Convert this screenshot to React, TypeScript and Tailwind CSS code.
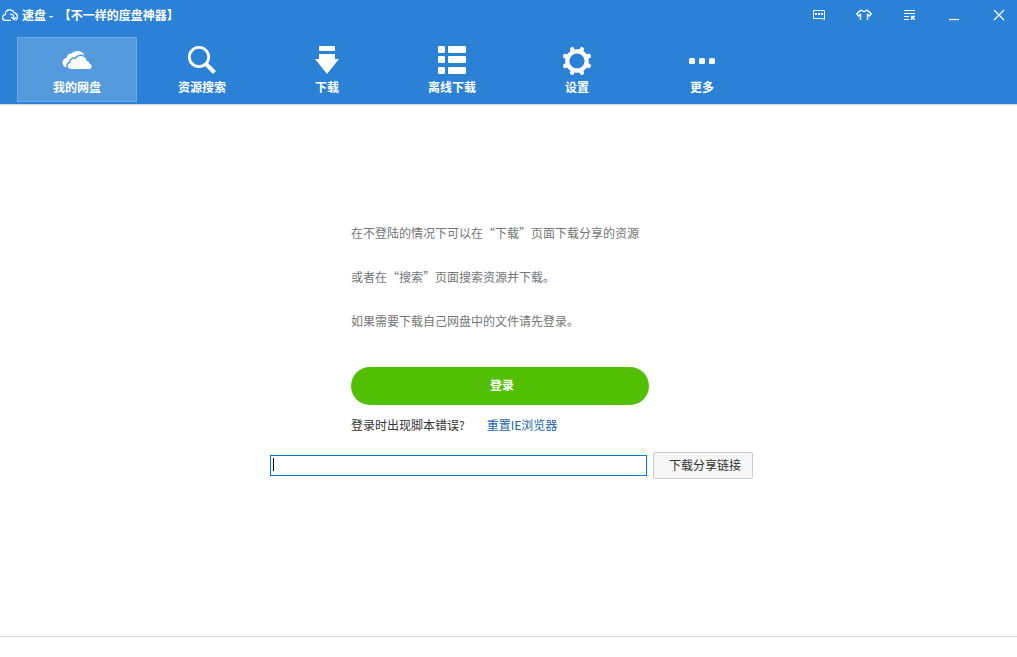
import type { ReactNode } from "react";

function LogoIcon() {
  return (
    <svg className="h-3 w-4" viewBox="0 0 16 12" fill="none" stroke="white" strokeWidth="1.2" strokeLinecap="round" strokeLinejoin="round">
      <path d="M8.5 11.3h-5A2.8 2.8 0 0 1 3.2 5.7C3.4 2.6 5.4.8 7.8.8c2 0 3.500 1 4.200 2.800" />
      <path d="M8.500 5.400c2.200-.6 3.400.8 3.400 4.800M9.600 8.400l2.300 2.200 2.200-2.200" />
      <path d="M12.400 3.800c2 .5 3 2 3 3.900 0 2-.6 3.100-1.600 3.600" />
    </svg>
  );
}

function CloudIcon() {
  return (
    <svg className="h-5 w-[30px]" viewBox="0 0 30 20" fill="white">
      <path d="M7 17.500H4.600C1.800 16.600.4 14.600.5 12.400.6 10 2.300 8.300 4.500 8.100 4.800 5.200 7 3.400 9.600 3.500 11 1.600 13.200.8 15.600.9c3.600.1 6.500 2.200 7 5.500V12H10z" />
      <path
        d="M9.600 19C7.200 19 5.700 17.600 5.700 15.900c0-1.600 1.100-2.800 2.600-3C8 10.200 10.500 8.200 13.700 9c1.300-2 3.200-3 5.300-2.900 3.100.1 5.300 2.300 5.600 5 2 .2 2.800 1.300 2.800 2.700 1.400.3 2.200 1.300 2.200 2.600 0 1.500-1.200 2.600-2.900 2.600z"
        stroke="#559add"
        strokeWidth="3"
        paintOrder="stroke"
      />
    </svg>
  );
}

function SearchIcon() {
  return (
    <svg className="h-[30px] w-[30px]" viewBox="0 0 30 30" fill="none" stroke="white">
      <circle cx="12" cy="12" r="9.7" strokeWidth="2.8" />
      <path d="M18.5 18.5l9 9" strokeWidth="4" />
    </svg>
  );
}

function DownloadIcon() {
  return (
    <svg className="h-[28px] w-6" viewBox="0 0 24 28" fill="white">
      <path d="M4 0h16v5H4zM4 8h16v5h4L12 28 0 13h4z" />
    </svg>
  );
}

function ListIcon() {
  return (
    <svg className="h-[28px] w-[28px]" viewBox="0 0 28 28" fill="white">
      {[0, 10, 21].map((y) => (
        <g key={y}>
          <rect x="0" y={y} width="7" height="7" rx="1" />
          <rect x="10" y={y} width="18" height="7" rx="1" />
        </g>
      ))}
    </svg>
  );
}

function GearIcon() {
  return (
    <svg className="h-[30px] w-[28px]" viewBox="-14 -15 28 30" fill="none" stroke="white">
      <circle cy="1" r="9.7" strokeWidth="4.2" />
      {[22.5, 67.5, 112.5, 157.5, 202.5, 247.5, 292.5, 337.5].map((a) => (
        <path key={a} d="M0-10v-2.700" strokeWidth="4.4" strokeLinecap="round" transform={`translate(0 1) rotate(${a})`} />
      ))}
    </svg>
  );
}

function MoreIcon() {
  return (
    <svg className="h-[8px] w-[26px]" viewBox="0 0 26 8" fill="white">
      <rect y="2" width="6" height="6" rx="1.5" />
      <rect x="10" y="2" width="6" height="6" rx="1.5" />
      <rect x="20" y="2" width="6" height="6" rx="1.5" />
    </svg>
  );
}

const tabs: { label: string; icon: ReactNode }[] = [
  { label: "我的网盘", icon: <CloudIcon /> },
  { label: "资源搜索", icon: <SearchIcon /> },
  { label: "下载", icon: <DownloadIcon /> },
  { label: "离线下载", icon: <ListIcon /> },
  { label: "设置", icon: <GearIcon /> },
  { label: "更多", icon: <MoreIcon /> },
];

const windowButtons: { label: string; icon: ReactNode }[] = [
  {
    label: "消息",
    icon: (
      <>
        <path d="M2.5 3.5h11v9l-2.500-1h-8.500z" />
        <path d="M4 7h2M7 7h2M10 7h2" strokeWidth="2" />
      </>
    ),
  },
  {
    label: "皮肤",
    icon: (
      <path
        d="M4.5 13V7.500L2.800 9 .7 6.800 4.500 3.500H6c.8 1.200 3.200 1.200 4 0h1.500l3.800 3.300L13.200 9 11.500 7.500V13"
        strokeWidth="1.3"
      />
    ),
  },
  {
    label: "菜单",
    icon: (
      <>
        <path d="M3 3.5h11M3 6.5h11M3 9.5h5M3 12.5h5" strokeWidth="1.2" />
        <path d="M10.5 13V9.5H14M10.5 9.5l3.300 3.300" strokeWidth="1.3" />
      </>
    ),
  },
  { label: "最小化", icon: <path d="M3 12.5h10" strokeWidth="1.2" /> },
  { label: "关闭", icon: <path d="M3 3l10 10M13 3L3 13" strokeWidth="1.2" /> },
];

export default function App() {
  return (
    <div lang="zh-CN" className="flex min-h-screen flex-col bg-white font-['Noto_Sans_CJK_SC',sans-serif] text-xs">
      <header className="border-b border-[#d6d6d6] bg-[#2b81d5] text-white">
        <div className="flex h-[30px] items-center justify-between px-0.5">
          <h1 className="flex items-center gap-1 font-bold">
            <LogoIcon />
            <span>速盘 -{"\u00a0 "}【不一样的度盘神器】</span>
          </h1>
          <div className="flex gap-[13px]">
            {windowButtons.map(({ label, icon }) => (
              <button key={label} type="button" aria-label={label} className="flex h-[30px] w-8 items-center justify-center">
                <svg className="h-4 w-4" viewBox="0 0 16 16" fill="none" stroke="white" strokeWidth="1">
                  {icon}
                </svg>
              </button>
            ))}
          </div>
        </div>

        <nav className="flex gap-[5px] px-[17px] pt-[7px] pb-0.5">
          {tabs.map(({ label, icon }, i) => (
            <button
              key={label}
              type="button"
              className={`flex h-[65px] w-[120px] flex-col items-center border pt-[7px] font-bold ${
                i === 0 ? "border-[#70aae4] bg-[#559add]" : "border-transparent"
              }`}
            >
              <span className="flex h-[30px] items-center">{icon}</span>
              <span className="leading-6">{label}</span>
            </button>
          ))}
        </nav>
      </header>

      <main className="flex flex-1 flex-col items-center pt-[106px] pl-1.5">
        <div className="w-[483px]">
          <div className="ml-[81px] w-[298px]">
            <div className="leading-[44px] text-[#757575]">
              <p>在不登陆的情况下可以在“下载”页面下载分享的资源</p>
              <p>或者在“搜索”页面搜索资源并下载。</p>
              <p>如果需要下载自己网盘中的文件请先登录。</p>
            </div>
            <button type="button" className="mt-6 h-[38px] w-full rounded-full bg-[#52bf04] pb-0.5 pl-1 font-bold text-white">
              登录
            </button>
            <p className="mt-[11px] flex gap-[22px] leading-[18px] text-[#333]">
              登录时出现脚本错误?
              <a href="#reset" className="text-[#1b66a8]">
                重置IE浏览器
              </a>
            </p>
          </div>
          <form className="mt-[18px] flex items-center gap-1.5">
            <div className="relative flex-1">
              <input
                type="text"
                aria-label="分享链接"
                className="block h-[21px] w-full border border-[#0078d7] bg-white px-1 outline-none"
              />
              <span className="absolute top-[3px] left-[3px] h-[13px] w-px bg-black" />
            </div>
            <button type="button" className="h-[27px] w-[100px] rounded-xs border border-[#ccc] bg-[#f6f6f6] pb-0.5 pl-1 text-[#333]">
              下载分享链接
            </button>
          </form>
        </div>
      </main>

      <footer className="h-[21px] border-t border-[#d6d6d6]" />
    </div>
  );
}
